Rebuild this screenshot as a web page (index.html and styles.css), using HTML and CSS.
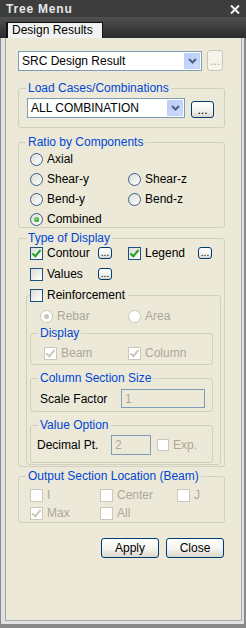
FILE: index.html
```html
<!DOCTYPE html>
<html>
<head>
    <meta charset="utf-8">
    <title>Tree Menu</title>
    <link rel="stylesheet" href="styles.css">
</head>
<body>
<div class="window">
    <div class="titlebar">
        <span class="title">Tree Menu</span>
        <svg class="close" width="10" height="9" viewBox="0 0 10 9"><path d="M1 0.5 L9 8.5 M9 0.5 L1 8.5" stroke="#f2f2f2" stroke-width="2"/></svg>
    </div>
    <div class="tabstrip">
        <div class="tab">Design Results</div>
    </div>
    <div class="frame">
        <div class="panel">

            <div class="row toprow">
                <div class="combo">
                    <span>SRC Design Result</span>
                    <span class="drop"><svg width="9" height="6" viewBox="0 0 9 6"><polyline points="1,1 4.5,4.5 8,1" fill="none" stroke="#4d6185" stroke-width="2"/></svg></span>
                </div>
                <button class="btn dots off">...</button>
            </div>

            <fieldset class="group load">
                <legend>Load Cases/Combinations</legend>
                <div class="row">
                    <div class="combo">
                        <span>ALL COMBINATION</span>
                        <span class="drop"><svg width="9" height="6" viewBox="0 0 9 6"><polyline points="1,1 4.5,4.5 8,1" fill="none" stroke="#4d6185" stroke-width="2"/></svg></span>
                    </div>
                    <button class="btn dots">...</button>
                </div>
            </fieldset>

            <fieldset class="group ratio">
                <legend>Ratio by Components</legend>
                <div class="opts">
                    <label class="opt"><span class="radio"></span>Axial</label>
                    <span></span>
                    <label class="opt"><span class="radio"></span>Shear-y</label>
                    <label class="opt"><span class="radio"></span>Shear-z</label>
                    <label class="opt"><span class="radio"></span>Bend-y</label>
                    <label class="opt"><span class="radio"></span>Bend-z</label>
                    <label class="opt"><span class="radio on"></span>Combined</label>
                </div>
            </fieldset>

            <fieldset class="group display">
                <legend>Type of Display</legend>
                <div class="types">
                    <label class="opt"><span class="chk on"></span>Contour</label>
                    <button class="btn mini">...</button>
                    <label class="opt"><span class="chk on"></span>Legend</label>
                    <button class="btn mini">...</button>
                    <label class="opt"><span class="chk"></span>Values</label>
                    <button class="btn mini">...</button>
                </div>

                <fieldset class="group reinf">
                    <legend class="opt"><span class="chk"></span>Reinforcement</legend>
                    <div class="rebar">
                        <label class="opt dis"><span class="radio on"></span>Rebar</label>
                        <label class="opt dis"><span class="radio"></span>Area</label>
                    </div>

                    <fieldset class="group sub show">
                        <legend>Display</legend>
                        <div class="members">
                            <label class="opt dis"><span class="chk on"></span>Beam</label>
                            <label class="opt dis"><span class="chk on"></span>Column</label>
                        </div>
                    </fieldset>

                    <fieldset class="group sub size">
                        <legend>Column Section Size</legend>
                        <div class="row">
                            <span class="scale-lbl">Scale Factor</span>
                            <span class="field scale">1</span>
                        </div>
                    </fieldset>

                    <fieldset class="group sub value">
                        <legend>Value Option</legend>
                        <div class="row">
                            <span class="dec-lbl">Decimal Pt.</span>
                            <span class="field dec">2</span>
                            <label class="opt dis exp"><span class="chk"></span>Exp.</label>
                        </div>
                    </fieldset>
                </fieldset>
            </fieldset>

            <fieldset class="group output">
                <legend>Output Section Location (Beam)</legend>
                <div class="locs">
                    <label class="opt dis"><span class="chk"></span>I</label>
                    <label class="opt dis"><span class="chk"></span>Center</label>
                    <label class="opt dis"><span class="chk"></span>J</label>
                    <label class="opt dis"><span class="chk on"></span>Max</label>
                    <label class="opt dis"><span class="chk"></span>All</label>
                </div>
            </fieldset>

            <div class="actions">
                <button class="btn">Apply</button>
                <button class="btn">Close</button>
            </div>

        </div>
    </div>
</div>
</body>
</html>
```

FILE: styles.css
```css
* {
    box-sizing: border-box;
}

body {
    margin: 0;
    font-family: "Liberation Sans", Arial, sans-serif;
    font-size: 12px;
    color: #000;
}

.window {
    width: 246px;
    height: 628px;
    display: flex;
    flex-direction: column;
    background: #3e3e3e;
}

.titlebar {
    height: 17px;
    flex: none;
    display: flex;
    align-items: center;
    justify-content: space-between;
    padding: 1px 6px 0 6px;
    background: #3d3d3d;
}

.title {
    color: #e6e6e6;
    font-weight: bold;
    letter-spacing: 0.8px;
}

.tabstrip {
    height: 21px;
    flex: none;
    display: flex;
    align-items: flex-end;
    padding-left: 6px;
    background: linear-gradient(#505050, #2b2b2b);
}

.tab {
    width: 97px;
    height: 16px;
    background: #f2f2f2;
    border: 1px solid #111;
    border-left-width: 2px;
    border-bottom: none;
    padding-left: 4px;
    line-height: 15px;
}

.frame {
    flex: 1;
    display: flex;
    background: #e2e2e2;
    border: 1px solid #8a8a8a;
    border-top: none;
    border-right-width: 2px;
    border-bottom-width: 4px;
    padding: 0 2px 3px 4px;
}

.panel {
    flex: 1;
    background: #ece9d8;
    border: 1px solid #a9a9a9;
    border-top: none;
    padding: 12px 0 0 12px;
}

.row {
    display: flex;
    align-items: center;
}

/* combo boxes */
.combo {
    height: 20px;
    display: flex;
    align-items: center;
    border: 1px solid #7f9db9;
    background: #fff;
    padding-left: 3px;
}

.combo span:first-child {
    flex: 1;
}

.drop {
    width: 16px;
    height: 16px;
    margin-right: 1px;
    display: flex;
    align-items: center;
    justify-content: center;
    background: linear-gradient(135deg, #b9cdf9, #cfdcfc);
    border: 1px solid #bccff7;
    border-radius: 1px;
}

.toprow .combo {
    width: 184px;
}

.toprow .dots {
    margin-left: 5px;
    width: 16px;
    height: 21px;
}

/* buttons */
.btn {
    font: inherit;
    color: #000;
    padding: 0;
    border: 1px solid #003c74;
    border-radius: 3px;
    background: linear-gradient(#ffffff, #f4f3ee 55%, #dcd7cb);
}

.btn.off {
    border-color: #c9c7ba;
    color: #aca899;
    background: #f5f4ea;
}

.dots {
    line-height: 12px;
}

.mini {
    width: 14px;
    height: 12px;
    font-size: 10px;
    line-height: 8px;
}

/* group boxes */
.group {
    margin: 0;
    width: 207px;
    border: 1px solid #d0d0bf;
    border-radius: 3px;
    padding: 0 0 0 7px;
}

.group > legend {
    padding: 0 2px;
    line-height: 14px;
    color: #0046d5;
}

.load {
    margin-top: 10px;
    padding-bottom: 9px;
}

.load .row {
    margin-top: 3px;
    align-items: flex-end;
}

.load .combo {
    width: 158px;
    margin-left: 1px;
}

.load .dots {
    width: 23px;
    height: 17px;
    margin-left: 6px;
}

.ratio {
    margin-top: 7px;
}

.opt {
    display: flex;
    align-items: center;
    height: 16px;
}

.opt.dis {
    color: #aca899;
}

.opts {
    display: grid;
    grid-template-columns: 98px auto;
    grid-auto-rows: 16px;
    row-gap: 4px;
    margin: 2px 0 0 4px;
}

/* radio and check boxes */
.radio,
.chk {
    width: 13px;
    height: 13px;
    flex: none;
    margin-right: 4px;
    display: flex;
    align-items: center;
    justify-content: center;
    border: 1px solid #1c5180;
    background: linear-gradient(135deg, #dcdcd5, #ffffff);
}

.radio {
    border-radius: 50%;
    border-color: #3a5f8c;
}

.radio.on::after {
    content: "";
    width: 5px;
    height: 5px;
    border-radius: 50%;
    background: radial-gradient(circle at 35% 35%, #7ee07e, #21a121 70%);
}

.chk.on::after {
    content: "";
    width: 3px;
    height: 7px;
    margin-top: -2px;
    border: solid #21a121;
    border-width: 0 2px 2px 0;
    transform: rotate(40deg);
}

.dis .radio,
.dis .chk {
    border-color: #cac8bb;
    background: #fff;
}

.dis .radio.on::after {
    background: #cac8bb;
}

.dis .chk.on::after {
    border-color: #cac8bb;
}

.display {
    margin-top: 3px;
    padding: 0 3px 1px 7px;
}

.types {
    display: grid;
    grid-template-columns: 68px 30px 70px 14px;
    grid-auto-rows: 16px;
    row-gap: 5px;
    align-items: center;
    margin-left: 4px;
}

.reinf {
    width: 195px;
    margin-top: 5px;
    padding: 0 0 1px 3px;
}

.reinf > legend.opt {
    padding: 0 3px 0 0;
    color: #000;
}

.rebar {
    display: grid;
    grid-template-columns: 88px auto;
    margin: 5px 0 0 10px;
}

.sub {
    width: 183px;
}

.show {
    margin-top: 2px;
    padding-bottom: 3px;
}

.members {
    display: grid;
    grid-template-columns: 84px auto;
    margin: 5px 0 0 6px;
}

.size {
    margin-top: 6px;
    padding-bottom: 3px;
}

.size .row {
    margin-top: 4px;
}

.scale-lbl {
    width: 81px;
    margin-left: 2px;
}

.field {
    display: flex;
    align-items: center;
    border: 1px solid #7f9db9;
    background: #ece9d8;
    color: #aca899;
    padding-left: 3px;
}

.scale {
    width: 84px;
    height: 19px;
}

.value {
    margin-top: 6px;
    padding-bottom: 7px;
}

.value .row {
    margin-top: 3px;
}

.dec-lbl {
    width: 74px;
    margin-left: -1px;
}

.dec {
    width: 40px;
    height: 20px;
}

.exp {
    margin-left: 6px;
}

.exp .chk {
    width: 12px;
    height: 12px;
    margin-right: 4px;
}

.output {
    margin-top: 2px;
    padding-bottom: 1px;
}

.locs {
    display: grid;
    grid-template-columns: 70px 77px auto;
    grid-auto-rows: 16px;
    row-gap: 2px;
    margin: 4px 0 0 4px;
}

.actions {
    width: 206px;
    display: flex;
    justify-content: flex-end;
    gap: 7px;
    margin-top: 15px;
}

.actions .btn {
    width: 58px;
    height: 20px;
}
```
